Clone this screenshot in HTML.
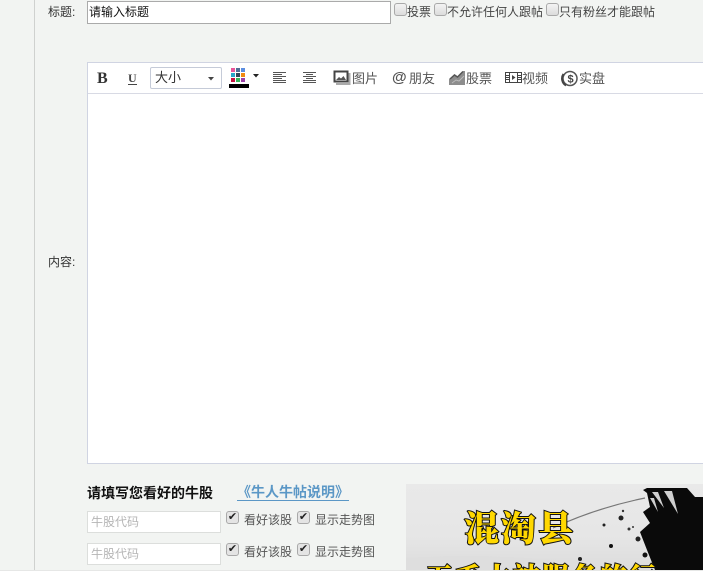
<!DOCTYPE html>
<html lang="zh">
<head>
<meta charset="utf-8">
<title>发帖</title>
<style>
html,body{margin:0;padding:0;width:703px;height:573px;overflow:hidden;background:#fff}
body{font-family:"Liberation Sans","Noto Sans CJK SC",sans-serif;color:#333;font-size:12px;position:relative}
.a{position:absolute;white-space:nowrap}
#bg{left:0;top:0;width:703px;height:570px;background:#f2f4f2}
#bgl{left:0;top:570px;width:703px;height:1px;background:#e6e7e6}
#vl{left:34px;top:0;width:1px;height:570px;background:#cfd1cf}
.lb{font-size:12px;line-height:14px;color:#333}
#title{left:87px;top:1px;width:302px;height:21px;background:#fff;border:1px solid #aaa;font-size:12px;line-height:21px;color:#111;text-indent:1px}
.cb{width:11px;height:11px;border:1px solid #a9a9a9;border-radius:3px;background:linear-gradient(#f3f3f3,#dcdcdc)}
.ct{font-size:12px;line-height:16px;color:#444}
#editor{left:87px;top:62px;width:616px;height:400px;border:1px solid #d0d4e2;border-right:0;background:#fff}
#tbline{left:88px;top:93px;width:615px;height:1px;background:#d8dae4}
#size{left:150px;top:67px;width:70px;height:20px;border:1px solid #c5cbd8;border-radius:2px;background:#fff;font-size:13px;line-height:19px;color:#333;text-indent:4px}
.tool{font-size:13px;line-height:16px;color:#555;top:71px}
.cbk{width:11px;height:11px;border:1px solid #a9a9a9;border-radius:3px;background:#e4e4e4;color:#222;font-size:11px;line-height:11px;text-align:center;overflow:hidden}
.inp{left:87px;width:132px;height:20px;border:1px solid #dcdedc;background:#fff;color:#b5b5b5;font-size:12px;line-height:20px;text-indent:3px}
.s{font-size:12px;line-height:14px;color:#555}
#banner{left:406px;top:484px;width:297px;height:86px;overflow:hidden;background:linear-gradient(#e9e9e9,#e6e6e6 60%,#dcdcdc)}
#banner div{position:absolute;white-space:nowrap;font-family:"Noto Serif CJK SC","Noto Sans CJK SC",serif;font-weight:900;color:#ffd800;-webkit-text-stroke:2px #111;paint-order:stroke fill}
</style>
</head>
<body>
<div class="a" id="bg"></div>
<div class="a" id="bgl"></div>
<div class="a" id="vl"></div>

<div class="a lb" style="left:48px;top:5px">标题:</div>
<div class="a" id="title">请输入标题</div>
<div class="a cb" style="left:394px;top:3px"></div>
<div class="a ct" style="left:407px;top:4px">投票</div>
<div class="a cb" style="left:434px;top:3px"></div>
<div class="a ct" style="left:447px;top:4px">不允许任何人跟帖</div>
<div class="a cb" style="left:546px;top:3px"></div>
<div class="a ct" style="left:559px;top:4px">只有粉丝才能跟帖</div>

<div class="a lb" style="left:48px;top:255px">内容:</div>
<div class="a" id="editor"></div>
<div class="a" id="tbline"></div>

<div class="a" style="left:97px;top:70px;font:bold 16px/18px 'Liberation Serif',serif;color:#333">B</div>
<div class="a" style="left:128px;top:71px;font:bold 12px/14px 'Liberation Serif',serif;color:#444;border-bottom:1px solid #444;height:13px">U</div>
<div class="a" id="size">大小</div>
<svg class="a" style="left:208px;top:77px" width="7" height="4"><path d="M0 0H6L3 3.500Z" fill="#444"/></svg>

<svg class="a" style="left:229px;top:68px" width="32" height="21">
<rect x="2" y="0" width="4" height="4" fill="#e8559a"/><rect x="7" y="0" width="4" height="4" fill="#4f6f96"/><rect x="12" y="0" width="4" height="4" fill="#5a8de0"/>
<rect x="2" y="5" width="4" height="4" fill="#2aa7c9"/><rect x="7" y="5" width="4" height="4" fill="#34465a"/><rect x="12" y="5" width="4" height="4" fill="#f08a12"/>
<rect x="2" y="10" width="4" height="4" fill="#c4123f"/><rect x="7" y="10" width="4" height="4" fill="#35b559"/><rect x="12" y="10" width="4" height="4" fill="#9c3fa8"/>
<rect x="0" y="16" width="20" height="4" fill="#000"/>
<path d="M24 6H30L27 9.500Z" fill="#222"/>
</svg>

<svg class="a" style="left:273px;top:71px" width="14" height="14" stroke="#555" stroke-width="1">
<path d="M0 1.500H13M0 3.500H9M0 5.500H13M0 7.500H9M0 9.500H13M0 11.500H13"/></svg>
<svg class="a" style="left:303px;top:71px" width="14" height="14" stroke="#555" stroke-width="1">
<path d="M0 1.500H13M3 3.500H10M0 5.500H13M3 7.500H10M0 9.500H13M0 11.500H13"/></svg>

<svg class="a" style="left:333px;top:70px" width="18" height="16">
<rect x="1.500" y="1.500" width="13" height="10" fill="#fff" stroke="#444" stroke-width="2"/>
<path d="M3 10L6 7L8 8.500L10.500 6L13 10Z" fill="#555"/>
<path d="M16.500 3V14H3" fill="none" stroke="#aaa" stroke-width="2"/>
</svg>
<div class="a tool" style="left:352px">图片</div>
<div class="a" style="left:392px;top:69px;font:bold 15px/18px 'Liberation Sans',sans-serif;color:#555">@</div>
<div class="a tool" style="left:409px">朋友</div>
<svg class="a" style="left:449px;top:69px" width="17" height="17">
<path d="M0 16V10L5 6L8 8L14 2L16 2V16Z" fill="#8d8d8d"/>
<path d="M1 10L5.500 6L8.500 8L14 2.500" fill="none" stroke="#555" stroke-width="1.500"/>
<path d="M3 14L7 11L10 12L15 7" fill="none" stroke="#bbb"/>
</svg>
<div class="a tool" style="left:466px">股票</div>
<svg class="a" style="left:505px;top:72px" width="17" height="12">
<rect x="0.500" y="0.500" width="16" height="10" fill="#fff" stroke="#444"/>
<path d="M4.500 1V10M12.500 1V10M1 3.500H4M1 5.500H4M1 7.500H4M13 3.500H16M13 5.500H16M13 7.500H16" stroke="#444"/>
<path d="M7 3L10.500 5.500L7 8Z" fill="#444"/>
</svg>
<div class="a tool" style="left:522px">视频</div>
<svg class="a" style="left:561px;top:70px" width="18" height="18">
<circle cx="9" cy="8.500" r="7" fill="#fff" stroke="#555" stroke-width="1.500"/>
<path d="M2.500 4A8 8 0 0 0 5 15.500" fill="none" stroke="#444" stroke-width="2"/>
<text x="9.500" y="12.500" text-anchor="middle" font-family="Liberation Sans" font-size="11" font-weight="bold" fill="#444">$</text>
</svg>
<div class="a tool" style="left:579px">实盘</div>

<div class="a" style="left:87px;top:485px;font-size:14px;line-height:16px;font-weight:bold;color:#111">请填写您看好的牛股</div>
<div class="a" style="left:237px;top:485px;font-size:14px;line-height:15px;font-weight:bold;color:#5b97c6;border-bottom:1px solid #5b97c6;height:15px;width:112px">《牛人牛帖说明》</div>

<div class="a inp" style="top:511px">牛股代码</div>
<div class="a cbk" style="left:226px;top:511px">✔</div>
<div class="a s" style="left:244px;top:513px">看好该股</div>
<div class="a cbk" style="left:297px;top:511px">✔</div>
<div class="a s" style="left:315px;top:513px">显示走势图</div>

<div class="a inp" style="top:543px">牛股代码</div>
<div class="a cbk" style="left:226px;top:543px">✔</div>
<div class="a s" style="left:244px;top:545px">看好该股</div>
<div class="a cbk" style="left:297px;top:543px">✔</div>
<div class="a s" style="left:315px;top:545px">显示走势图</div>

<div class="a" id="banner">
<svg style="position:absolute;left:0;top:0" width="297" height="86">
<path d="M0 74Q60 70 120 74T200 76L200 86H0Z" fill="#dedede"/>
<path d="M147 44Q190 24 239 14" fill="none" stroke="#777" stroke-width="1.200"/>
<path d="M237 6L241 4L281 4L289 13L297 13V86H249L241 66L234 48L244 39L237 28L244 23L241 9Z" fill="#0a0a0a"/>
<path d="M246 8L258 24L252 8ZM258 7L272 30L266 7ZM244 14L252 28L248 14Z" fill="#cfcfcf"/>
<circle cx="215" cy="34" r="2.500" fill="#222"/><circle cx="198" cy="41" r="1.500" fill="#222"/><circle cx="205" cy="62" r="2" fill="#111"/><circle cx="232" cy="55" r="2.500" fill="#222"/><circle cx="239" cy="71" r="2.500" fill="#111"/><circle cx="223" cy="45" r="1.500" fill="#333"/><circle cx="174" cy="75" r="2" fill="#222"/><circle cx="217" cy="27" r="1.200" fill="#333"/><circle cx="227" cy="43" r="1" fill="#333"/>
</svg>
<div style="left:58px;top:21px;font-size:35px;line-height:44px;letter-spacing:2px">混淘县</div>
<div style="left:20px;top:75px;font-size:27px;line-height:34px;letter-spacing:2px">五毛大神服务的行</div>
</div>
</body>
</html>
